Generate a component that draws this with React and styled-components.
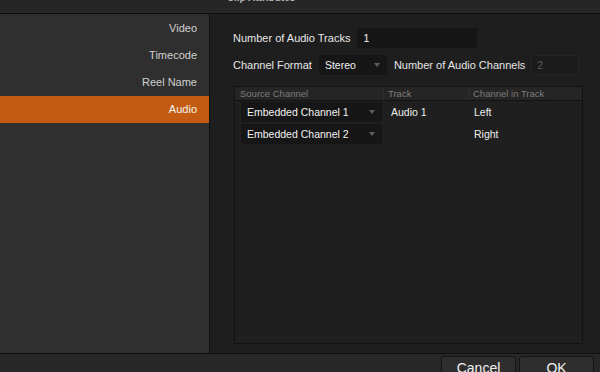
import React from "react";
import styled, { createGlobalStyle } from "styled-components";

const GlobalStyle = createGlobalStyle`
  html, body {
    margin: 0;
    padding: 0;
    background: #1e1e1e;
    overflow: hidden;
  }
  body {
    font-family: "Liberation Sans", Arial, sans-serif;
  }
`;

const Dialog = styled.div`
  width: 600px;
  height: 372px;
  display: flex;
  flex-direction: column;
  background: #1e1e1e;
  overflow: hidden;
`;

const TitleBar = styled.div`
  height: 13px;
  flex: none;
  background: #262626;
  border-bottom: 1px solid #0e0e0e;
  display: flex;
  justify-content: center;
  padding-right: 78px;
  overflow: hidden;
`;

const Title = styled.div`
  font-size: 10px;
  font-weight: bold;
  line-height: 12px;
  color: #b4b4b4;
  margin-top: -8px;
`;

const Body = styled.div`
  flex: 1;
  display: flex;
  min-height: 0;
`;

const Sidebar = styled.div`
  width: 209px;
  flex: none;
  background: #2f2f2f;
  border-right: 1px solid #121212;
  padding-top: 1px;
  display: flex;
  flex-direction: column;
`;

const NavItem = styled.div`
  height: 27px;
  line-height: 27px;
  padding-right: 12px;
  text-align: right;
  font-size: 11px;
  color: ${({ active }) => (active ? "#f4f4f4" : "#cfcfcf")};
  background: ${({ active }) => (active ? "#c35c12" : "transparent")};
`;

const Content = styled.div`
  flex: 1;
  display: flex;
  flex-direction: column;
  padding: 14px 17px 9px 23px;
  gap: 7px;
  min-width: 0;
`;

const FormRow = styled.div`
  display: flex;
  align-items: center;
  height: 20px;
  gap: 7px;
`;

const Label = styled.span`
  font-size: 11px;
  color: #e6e6e6;
  white-space: nowrap;
`;

const Field = styled.div`
  width: ${({ w }) => w}px;
  height: ${({ h }) => h || 20}px;
  box-sizing: border-box;
  background: ${({ disabled }) => (disabled ? "#1b1b1b" : "#161616")};
  border: 1px solid ${({ disabled }) => (disabled ? "#242424" : "#161616")};
  display: flex;
  align-items: center;
  padding: 0 5px;
  font-size: 10.5px;
  color: ${({ disabled }) => (disabled ? "#5a5a5a" : "#f2f2f2")};
  margin-left: ${({ ml }) => ml || 0}px;
`;

const Select = styled(Field)`
  justify-content: space-between;
  padding-right: 6px;
`;

const Caret = styled.span`
  width: 0;
  height: 0;
  border-left: 3px solid transparent;
  border-right: 3px solid transparent;
  border-top: 4px solid #5e5e5e;
`;

const Table = styled.div`
  flex: 1;
  margin-top: 4px;
  margin-left: 1px;
  border: 1px solid #121212;
  background: #1f1f1f;
  display: flex;
  flex-direction: column;
`;

const Grid = styled.div`
  display: grid;
  grid-template-columns: 148px 86px 1fr;
  align-items: center;
`;

const HeaderRow = styled(Grid)`
  height: 13px;
  background: #252525;
  border-bottom: 1px solid #121212;
  margin-bottom: 1px;
`;

const HeadCell = styled.div`
  font-size: 9.5px;
  line-height: 13px;
  color: #7c7c7c;
  padding-left: ${({ pl }) => pl}px;
  border-left: ${({ divider }) => (divider ? "1px solid #2e2e2e" : "none")};
`;

const DataRow = styled(Grid)`
  height: 20px;
  margin-bottom: 2px;
`;

const Cell = styled.div`
  font-size: 10.5px;
  color: #ededed;
  padding-left: ${({ pl }) => pl}px;
`;

const Footer = styled.div`
  height: 16px;
  flex: none;
  background: #272727;
  border-top: 1px solid #0f0f0f;
  display: flex;
  justify-content: flex-end;
  gap: 3px;
  padding: 2px 6px 0 0;
  overflow: hidden;
`;

const Button = styled.div`
  width: 75px;
  height: 22px;
  flex: none;
  box-sizing: border-box;
  background: #2e2e2e;
  border: 1px solid #141414;
  border-radius: 3px;
  text-align: center;
  font-size: 14px;
  line-height: 20px;
  padding-top: 1px;
  color: #f0f0f0;
`;

const navItems = ["Video", "Timecode", "Reel Name", "Audio"];

const channels = [
  { source: "Embedded Channel 1", track: "Audio 1", side: "Left" },
  { source: "Embedded Channel 2", track: "", side: "Right" },
];

export default function App() {
  return (
    <Dialog>
      <GlobalStyle />
      <TitleBar>
        <Title>Clip Attributes</Title>
      </TitleBar>
      <Body>
        <Sidebar>
          {navItems.map((item) => (
            <NavItem key={item} active={item === "Audio"}>
              {item}
            </NavItem>
          ))}
        </Sidebar>
        <Content>
          <FormRow>
            <Label>Number of Audio Tracks</Label>
            <Field w={120}>1</Field>
          </FormRow>
          <FormRow>
            <Label>Channel Format</Label>
            <Select w={68}>
              Stereo
              <Caret />
            </Select>
            <Label>Number of Audio Channels</Label>
            <Field w={48} disabled ml={-1}>
              2
            </Field>
          </FormRow>
          <Table>
            <HeaderRow>
              <HeadCell pl={5}>Source Channel</HeadCell>
              <HeadCell pl={4} divider>
                Track
              </HeadCell>
              <HeadCell pl={3} divider>
                Channel in Track
              </HeadCell>
            </HeaderRow>
            {channels.map((c) => (
              <DataRow key={c.source}>
                <Select w={141} ml={6}>
                  {c.source}
                  <Caret />
                </Select>
                <Cell pl={8}>{c.track}</Cell>
                <Cell pl={5}>{c.side}</Cell>
              </DataRow>
            ))}
          </Table>
        </Content>
      </Body>
      <Footer>
        <Button>Cancel</Button>
        <Button>OK</Button>
      </Footer>
    </Dialog>
  );
}
